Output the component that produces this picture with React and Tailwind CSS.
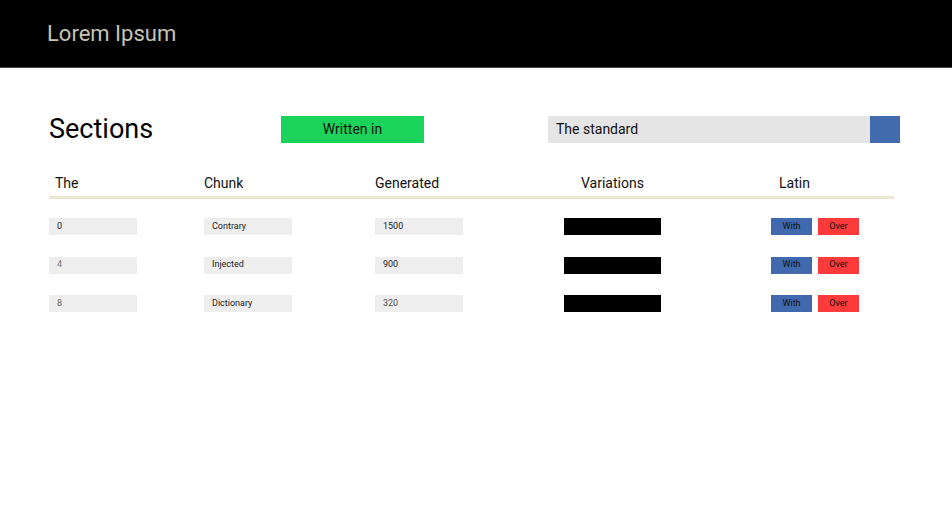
import React from "react";

const rows = [
  { a: "0", aTone: "text-[#222]", b: "Contrary", c: "1500", cTone: "text-[#222]" },
  { a: "4", aTone: "text-[#777]", b: "Injected", c: "900", cTone: "text-[#222]" },
  { a: "8", aTone: "text-[#666]", b: "Dictionary", c: "320", cTone: "text-[#555]" },
];

function Cell({ children, tone = "text-[#222]" }) {
  return (
    <div className={`w-[88px] h-[17px] bg-[#efeeee] flex items-center pl-[8px] text-[9px] ${tone}`}>
      {children}
    </div>
  );
}

function App() {
  return (
    <div className="min-h-screen bg-white font-['Roboto',sans-serif]">
      <header className="h-[68px] bg-black flex items-center pl-[47px] border-b border-[#444]">
        <h1 className="text-[22px] text-[#c6c4b2]">Lorem Ipsum</h1>
      </header>

      <main className="px-[49px]">
        <div className="mt-[48px] flex items-center">
          <h2 className="w-[232px] text-[27px] leading-none text-black">Sections</h2>
          <button className="w-[143px] h-[27px] bg-[#19d35a] text-[14px] text-[#111]">
            Written in
          </button>
          <div className="ml-[124px] flex">
            <div className="w-[322px] h-[27px] bg-[#e5e5e5] flex items-center pl-[8px] text-[14px] text-[#111]">
              The standard
            </div>
            <button className="w-[30px] h-[27px] bg-[#426bad]"></button>
          </div>
        </div>

        <div className="mt-[30px] grid grid-cols-[155px_171px_189px_207px_1fr] h-5 items-center text-[14px] text-[#111]">
          <div className="pl-[6px]">The</div>
          <div>Chunk</div>
          <div>Generated</div>
          <div className="pl-[17px]">Variations</div>
          <div className="pl-[8px]">Latin</div>
        </div>
        <div className="mt-[3px] h-[3px] w-[845px] bg-[#ebe6cf]"></div>

        <div className="mt-[19px] flex flex-col gap-[21.5px]">
          {rows.map((r) => (
            <div key={r.b} className="grid grid-cols-[155px_171px_189px_207px_1fr] items-center">
              <Cell tone={r.aTone}>{r.a}</Cell>
              <Cell>{r.b}</Cell>
              <Cell tone={r.cTone}>{r.c}</Cell>
              <div className="w-[97px] h-[17px] bg-black"></div>
              <div className="flex gap-[6px]">
                <button className="w-[41px] h-[17px] bg-[#4169ad] text-[9px] text-[#111]">With</button>
                <button className="w-[41px] h-[17px] bg-[#fe3a3a] text-[9px] text-[#111]">Over</button>
              </div>
            </div>
          ))}
        </div>
      </main>
    </div>
  );
}

export default App;
